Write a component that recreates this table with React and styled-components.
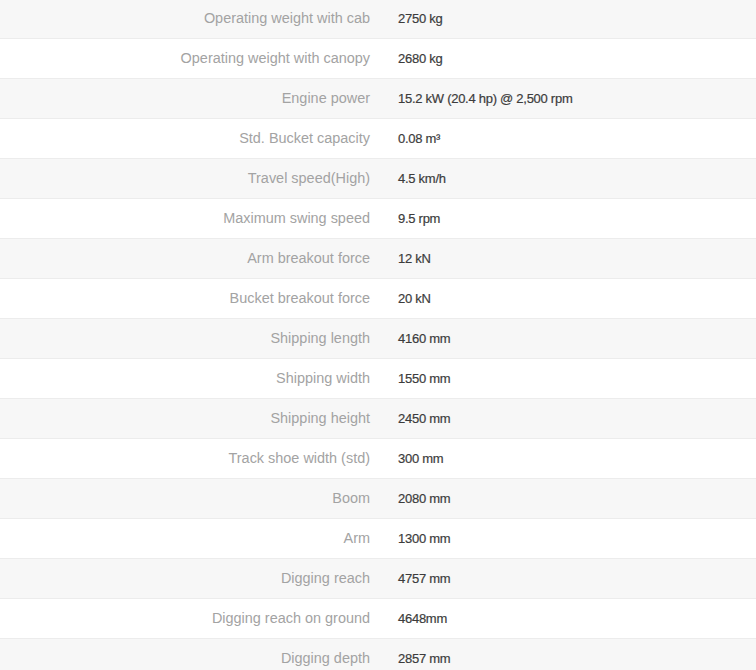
import React from 'react';
import styled, { createGlobalStyle } from 'styled-components';

const GlobalStyle = createGlobalStyle`
  html, body {
    margin: 0;
    padding: 0;
    background: #fff;
    font-family: "Liberation Sans", Arial, sans-serif;
  }
`;

const Table = styled.div`
  width: 756px;
  margin-top: -2px;
`;

const Row = styled.div`
  display: grid;
  grid-template-columns: 370px 1fr;
  column-gap: 28px;
  align-items: center;
  height: 38px;
  padding-bottom: 1px;
  border-top: 1px solid #ececec;
  background: ${({ $striped }) => ($striped ? '#f7f7f7' : '#fff')};
`;

const Label = styled.div`
  text-align: right;
  font-size: 14.45px;
  color: #a3a3a3;
`;

const Value = styled.div`
  font-size: 13px;
  letter-spacing: -0.27px;
  color: #3c3c3c;
  -webkit-text-stroke: 0.2px #3c3c3c;
`;

const specs = [
  ['Operating weight with cab', '2750 kg'],
  ['Operating weight with canopy', '2680 kg'],
  ['Engine power', '15.2 kW (20.4 hp) @ 2,500 rpm'],
  ['Std. Bucket capacity', '0.08 m³'],
  ['Travel speed(High)', '4.5 km/h'],
  ['Maximum swing speed', '9.5 rpm'],
  ['Arm breakout force', '12 kN'],
  ['Bucket breakout force', '20 kN'],
  ['Shipping length', '4160 mm'],
  ['Shipping width', '1550 mm'],
  ['Shipping height', '2450 mm'],
  ['Track shoe width (std)', '300 mm'],
  ['Boom', '2080 mm'],
  ['Arm', '1300 mm'],
  ['Digging reach', '4757 mm'],
  ['Digging reach on ground', '4648mm'],
  ['Digging depth', '2857 mm'],
];

const App = () => (
  <>
    <GlobalStyle />
    <Table>
      {specs.map(([label, value], i) => (
        <Row key={label} $striped={i % 2 === 0}>
          <Label>{label}</Label>
          <Value>{value}</Value>
        </Row>
      ))}
    </Table>
  </>
);

export default App;
